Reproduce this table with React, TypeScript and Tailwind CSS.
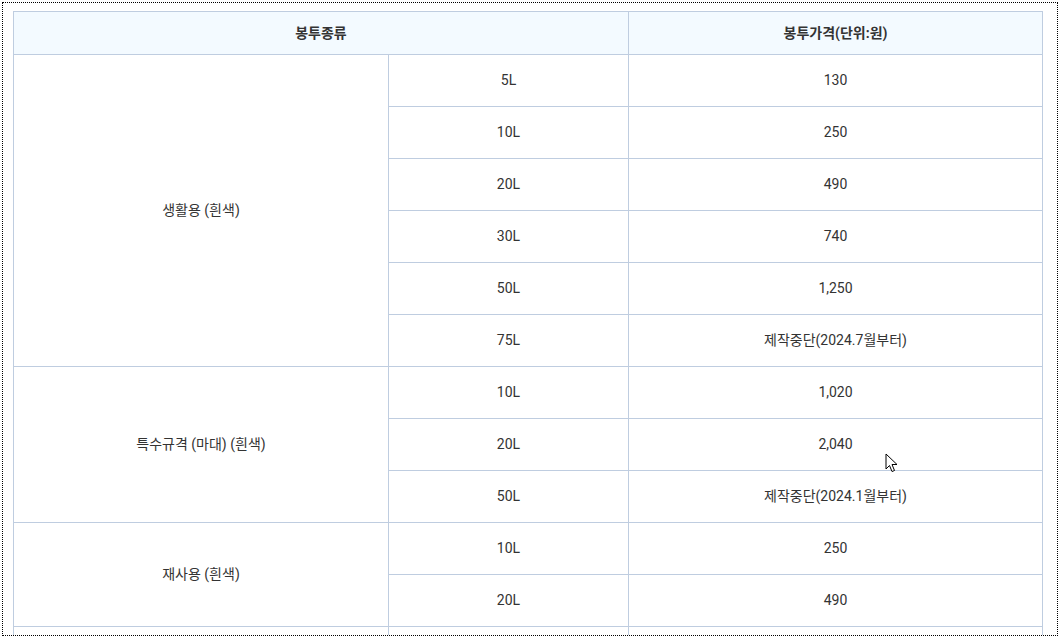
import React from 'react';

type Row = { size: string; price: string };
type Group = { name: string; rows: Row[] };

const groups: Group[] = [
    {
        name: '생활용 (흰색)',
        rows: [
            { size: '5L', price: '130' },
            { size: '10L', price: '250' },
            { size: '20L', price: '490' },
            { size: '30L', price: '740' },
            { size: '50L', price: '1,250' },
            { size: '75L', price: '제작중단(2024.7월부터)' },
        ],
    },
    {
        name: '특수규격 (마대) (흰색)',
        rows: [
            { size: '10L', price: '1,020' },
            { size: '20L', price: '2,040' },
            { size: '50L', price: '제작중단(2024.1월부터)' },
        ],
    },
    {
        name: '재사용 (흰색)',
        rows: [
            { size: '10L', price: '250' },
            { size: '20L', price: '490' },
        ],
    },
];

const cell = "border border-[#bfcde0] text-center align-middle h-[52px] p-0";

export default function App() {
    return (
        <div className="bg-white w-[1061px] h-[638px] p-[2px] font-['Roboto','Noto_Sans_CJK_KR',sans-serif] text-[14px] text-[#333]">
            <div className="relative h-[634px] w-[1056px] border border-dotted border-black overflow-hidden pl-[10px] pt-[8px]">
                <table className="border-collapse table-fixed w-[1029px]">
                    <colgroup>
                        <col className="w-[375px]" />
                        <col className="w-[240px]" />
                        <col className="w-[414px]" />
                    </colgroup>
                    <thead>
                        <tr className="bg-[#f3faff]">
                            <th colSpan={2} className="border border-[#bfcde0] h-[43px] font-bold text-center">봉투종류</th>
                            <th className="border border-[#bfcde0] h-[43px] font-bold text-center">봉투가격(단위:원)</th>
                        </tr>
                    </thead>
                    <tbody>
                        {groups.map(g =>
                            g.rows.map((r, i) => (
                                <tr key={g.name + r.size}>
                                    {i === 0 && (
                                        <td rowSpan={g.rows.length} className={cell}>{g.name}</td>
                                    )}
                                    <td className={cell}>{r.size}</td>
                                    <td className={cell}>{r.price}</td>
                                </tr>
                            ))
                        )}
                        {/* next row continues past the bottom of the view */}
                        <tr>
                            <td className={cell}></td>
                            <td className={cell}></td>
                            <td className={cell}></td>
                        </tr>
                    </tbody>
                </table>

                {/* mouse pointer captured in the screenshot */}
                <svg className="absolute left-[882px] top-[450px]" width="13" height="20" viewBox="0 0 13 20">
                    <path d="M1 1 L1 16 L4.5 12.5 L7 18.5 L9.5 17.5 L7 11.5 L12 11.5 Z" fill="white" stroke="black" strokeWidth="1" strokeLinejoin="round" />
                </svg>
            </div>
        </div>
    );
}
